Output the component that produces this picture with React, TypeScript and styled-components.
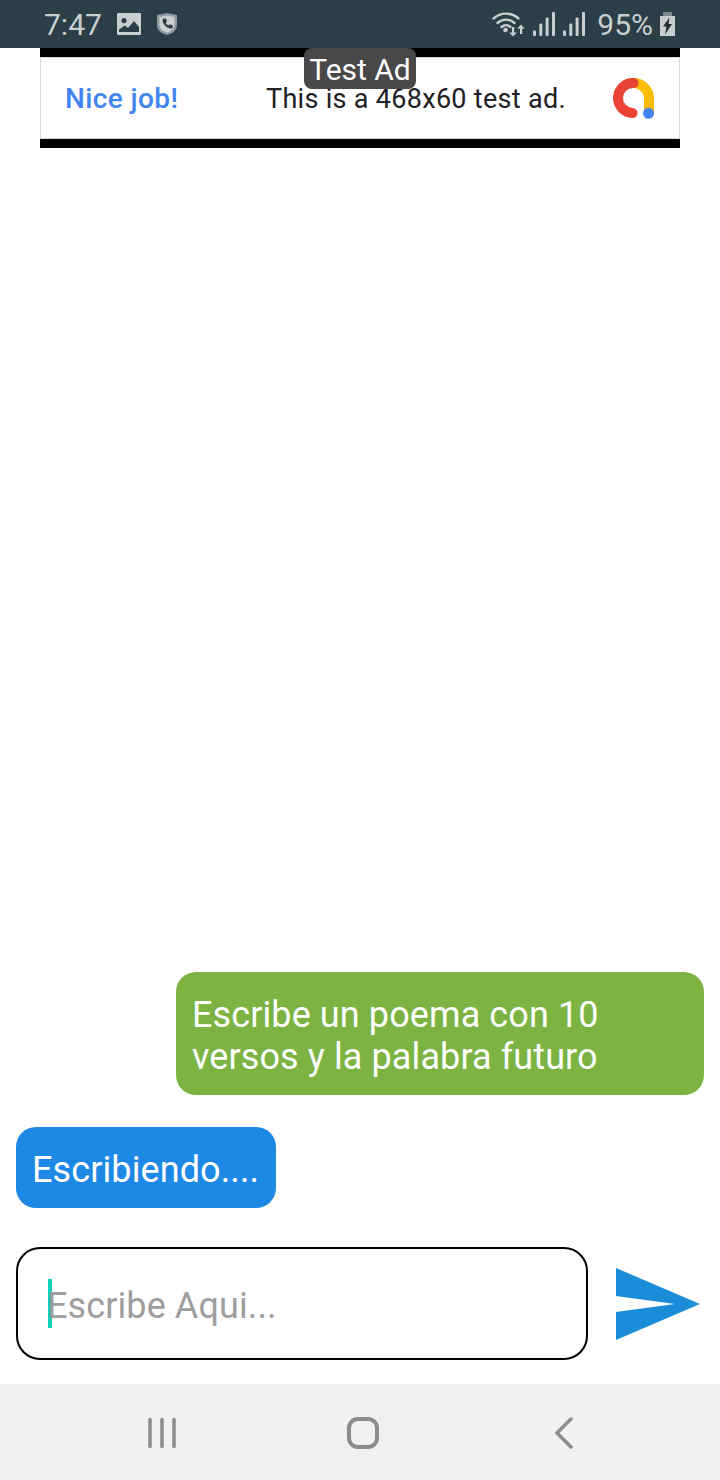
import React from "react";
import styled, { createGlobalStyle } from "styled-components";

const GlobalStyle = createGlobalStyle`
  html, body {
    margin: 0;
    padding: 0;
    background: #fff;
  }
  * {
    box-sizing: border-box;
  }
`;

const Screen = styled.div`
  width: 720px;
  height: 1480px;
  display: flex;
  flex-direction: column;
  font-family: Roboto, "Liberation Sans", sans-serif;
  overflow: hidden;
`;

const StatusBar = styled.div`
  height: 48px;
  flex: none;
  background: #2c3e47;
  color: #c9ced1;
  display: flex;
  align-items: center;
  justify-content: space-between;
  padding: 0 45px 0 44px;
  font-size: 30px;
`;

const StatusGroup = styled.div`
  display: flex;
  align-items: center;
  gap: ${({ $gap }: { $gap: number }) => $gap}px;
`;

const Time = styled.span`
  margin-right: -1px;
`;

const Percent = styled.span`
  margin: 0 -1px 0 4px;
`;

const AdSlot = styled.div`
  position: relative;
  flex: none;
  width: 640px;
  height: 100px;
  margin: 0 auto;
  background: #000;
  padding: 9px 0;
`;

const AdBanner = styled.div`
  height: 82px;
  background: #fff;
  border: 1px solid #d5dbe3;
  display: flex;
  align-items: center;
  padding: 2px 24px 0 24px;
`;

const AdTitle = styled.span`
  width: 201px;
  margin-top: -2px;
  color: #4285f0;
  font-size: 28px;
  font-weight: 500;
  letter-spacing: 0.4px;
`;

const AdText = styled.span`
  flex: 1;
  color: #202124;
  font-size: 27px;
  letter-spacing: 0.3px;
`;

const AdLabel = styled.div`
  position: absolute;
  top: 0;
  left: 264px;
  width: 112px;
  height: 41px;
  background: #484848;
  border-radius: 8px;
  color: #fff;
  font-size: 30px;
  line-height: 43px;
  text-align: center;
`;

const Chat = styled.div`
  flex: 1;
  display: flex;
  flex-direction: column;
  justify-content: flex-end;
  padding: 0 16px;
`;

const Bubble = styled.div<{ $mine?: boolean }>`
  align-self: ${({ $mine }) => ($mine ? "flex-end" : "flex-start")};
  width: ${({ $mine }) => ($mine ? "528px" : "260px")};
  margin-bottom: ${({ $mine }) => ($mine ? "32px" : "39px")};
  padding: 22px 16px 17px;
  border-radius: 20px;
  background: ${({ $mine }) => ($mine ? "#7cb342" : "#1e88e5")};
  color: #fff;
  font-size: 36px;
  line-height: 42px;
  letter-spacing: 0.1px;
`;

const Composer = styled.div`
  display: flex;
  align-items: center;
  padding-bottom: 24px;
`;

const InputBox = styled.div`
  width: 572px;
  height: 113px;
  border: 2px solid #000;
  border-radius: 24px;
  display: flex;
  align-items: center;
  padding-left: 30px;
  color: #9e9e9e;
  font-size: 36px;
  letter-spacing: 0.1px;
`;

const Caret = styled.span`
  width: 4px;
  height: 49px;
  margin-right: -5px;
  background: #12d0bb;
`;

const Placeholder = styled.span`
  padding-top: 4px;
`;

const SendButton = styled.div`
  margin-left: 28px;
  display: flex;
`;

const NavBar = styled.div`
  height: 96px;
  flex: none;
  background: #f1f1f1;
  display: flex;
  align-items: center;
  justify-content: center;
  padding: 2px 0 0 6px;
`;

const NavSlot = styled.div`
  width: 201px;
  display: flex;
  justify-content: center;
`;

const ImageIcon = () => (
  <svg width="24" height="22" viewBox="0 0 24 22">
    <path
      fill="#c9ced1"
      fillRule="evenodd"
      d="M1 0h22a1 1 0 0 1 1 1v20a1 1 0 0 1-1 1H1a1 1 0 0 1-1-1V1a1 1 0 0 1 1-1ZM7 5a2.600 2.600 0 1 0 0 5.200A2.600 2.600 0 0 0 7 5Zm-5 14h20v-5l-5-6-6 7-3-2.500-6 4Z"
    />
  </svg>
);

const ShieldIcon = () => (
  <svg width="20" height="22" viewBox="0 0 20 22">
    <path fill="#8f9a9f" d="M10 0 20 2v10c0 5-4 8.500-10 10C4 20.500 0 17 0 12V2Z" />
    <path fill="#c9ced1" d="M10 2.500 17.500 4v8c0 3.600-3 6.300-7.500 7.500C5.500 18.300 2.500 15.600 2.500 12V4Z" />
    <path
      fill="#2c3e47"
      d="M7 5.500h2l1 3-1.300 1.300c.6 1.300 1.400 2.100 2.700 2.700l1.300-1.300 3 1v2c0 .8-.6 1.300-1.400 1.300C9.800 15.300 5.700 11.200 5.500 6.900 5.500 6.100 6.200 5.500 7 5.500Z"
    />
  </svg>
);

const WifiIcon = () => (
  <svg width="33" height="25" viewBox="0 0 33 25" fill="none">
    <g stroke="#c9ced1" strokeWidth="2.400" strokeLinecap="round">
      <path d="M1.500 6.500C8.500 0 19.500 0 26.500 6.500" />
      <path d="M5.500 11c5-4.500 12-4.500 17 0" />
      <path d="M9.500 15c3-2.500 6-2.500 9 0" />
    </g>
    <circle cx="13.500" cy="18" r="2.300" fill="#c9ced1" />
    <path
      fill="#c9ced1"
      d="M20 15h2.200v5.500h2.600l-3.700 4-3.700-4H20ZM29 12.500l3.700 4.200h-2.500V22H28v-5.300h-2.700Z"
    />
  </svg>
);

const SignalIcon = () => (
  <svg width="22" height="24" viewBox="0 0 22 24" fill="#c9ced1">
    <rect x="0" y="18.500" width="3" height="5.500" rx="1" />
    <rect x="6.300" y="11.500" width="3" height="12.500" rx="1" />
    <rect x="12.600" y="5.500" width="3" height="18.500" rx="1" />
    <rect x="19" y="0" width="3" height="24" rx="1" />
  </svg>
);

const BatteryIcon = () => (
  <svg width="15" height="24" viewBox="0 0 15 24">
    <path fill="#7c878d" d="M3 0h9v4H3Z" />
    <path fill="#c9ced1" d="M0 4h15v20H0Z" />
    <path fill="#1d2a30" d="M9.500 5.500 3 14.500h3.500L5 22.500l7-10.500H8.500Z" />
  </svg>
);

const AdMobLogo = () => (
  <svg width="44" height="44" viewBox="0 0 44 44" fill="none">
    <path d="M22 6c9 0 16 7 16 15.500V36" stroke="#fbbc04" strokeWidth="10" strokeLinecap="round" />
    <path d="M22.500 6A15 15 0 0 0 21.500 36" stroke="#ea4335" strokeWidth="10" strokeLinecap="round" />
    <circle cx="37.500" cy="36.300" r="5.500" fill="#4285f4" />
  </svg>
);

const SendIcon = () => (
  <svg width="84" height="72" viewBox="0 0 84 72">
    <path fill="#1a8cd8" d="M0 0 84 36 0 72V44L59 36 0 28Z" />
  </svg>
);

const RecentsIcon = () => (
  <svg width="30" height="32" viewBox="0 0 30 32" stroke="#8c8c8c" strokeWidth="3.500" strokeLinecap="round">
    <path d="M3 2.500v27M15 2.500v27M27 2.500v27" />
  </svg>
);

const HomeIcon = () => (
  <svg width="32" height="32" viewBox="0 0 32 32" fill="none">
    <rect x="2" y="2" width="28" height="28" rx="9" stroke="#8c8c8c" strokeWidth="4" />
  </svg>
);

const BackIcon = () => (
  <svg width="20" height="32" viewBox="0 0 20 32" fill="none">
    <path d="M17 2 3 16l14 14" stroke="#8c8c8c" strokeWidth="3.500" strokeLinecap="round" strokeLinejoin="round" />
  </svg>
);

export default function App() {
  return (
    <Screen>
      <GlobalStyle />
      <StatusBar>
        <StatusGroup $gap={16}>
          <Time>7:47</Time>
          <ImageIcon />
          <ShieldIcon />
        </StatusGroup>
        <StatusGroup $gap={8}>
          <WifiIcon />
          <SignalIcon />
          <SignalIcon />
          <Percent>95%</Percent>
          <BatteryIcon />
        </StatusGroup>
      </StatusBar>

      <AdSlot>
        <AdBanner>
          <AdTitle>Nice job!</AdTitle>
          <AdText>This is a 468x60 test ad.</AdText>
          <AdMobLogo />
        </AdBanner>
        <AdLabel>Test Ad</AdLabel>
      </AdSlot>

      <Chat>
        <Bubble $mine>Escribe un poema con 10 versos y la palabra futuro</Bubble>
        <Bubble>Escribiendo....</Bubble>
        <Composer>
          <InputBox>
            <Caret />
            <Placeholder>Escribe Aqui...</Placeholder>
          </InputBox>
          <SendButton>
            <SendIcon />
          </SendButton>
        </Composer>
      </Chat>

      <NavBar>
        <NavSlot><RecentsIcon /></NavSlot>
        <NavSlot><HomeIcon /></NavSlot>
        <NavSlot><BackIcon /></NavSlot>
      </NavBar>
    </Screen>
  );
}
